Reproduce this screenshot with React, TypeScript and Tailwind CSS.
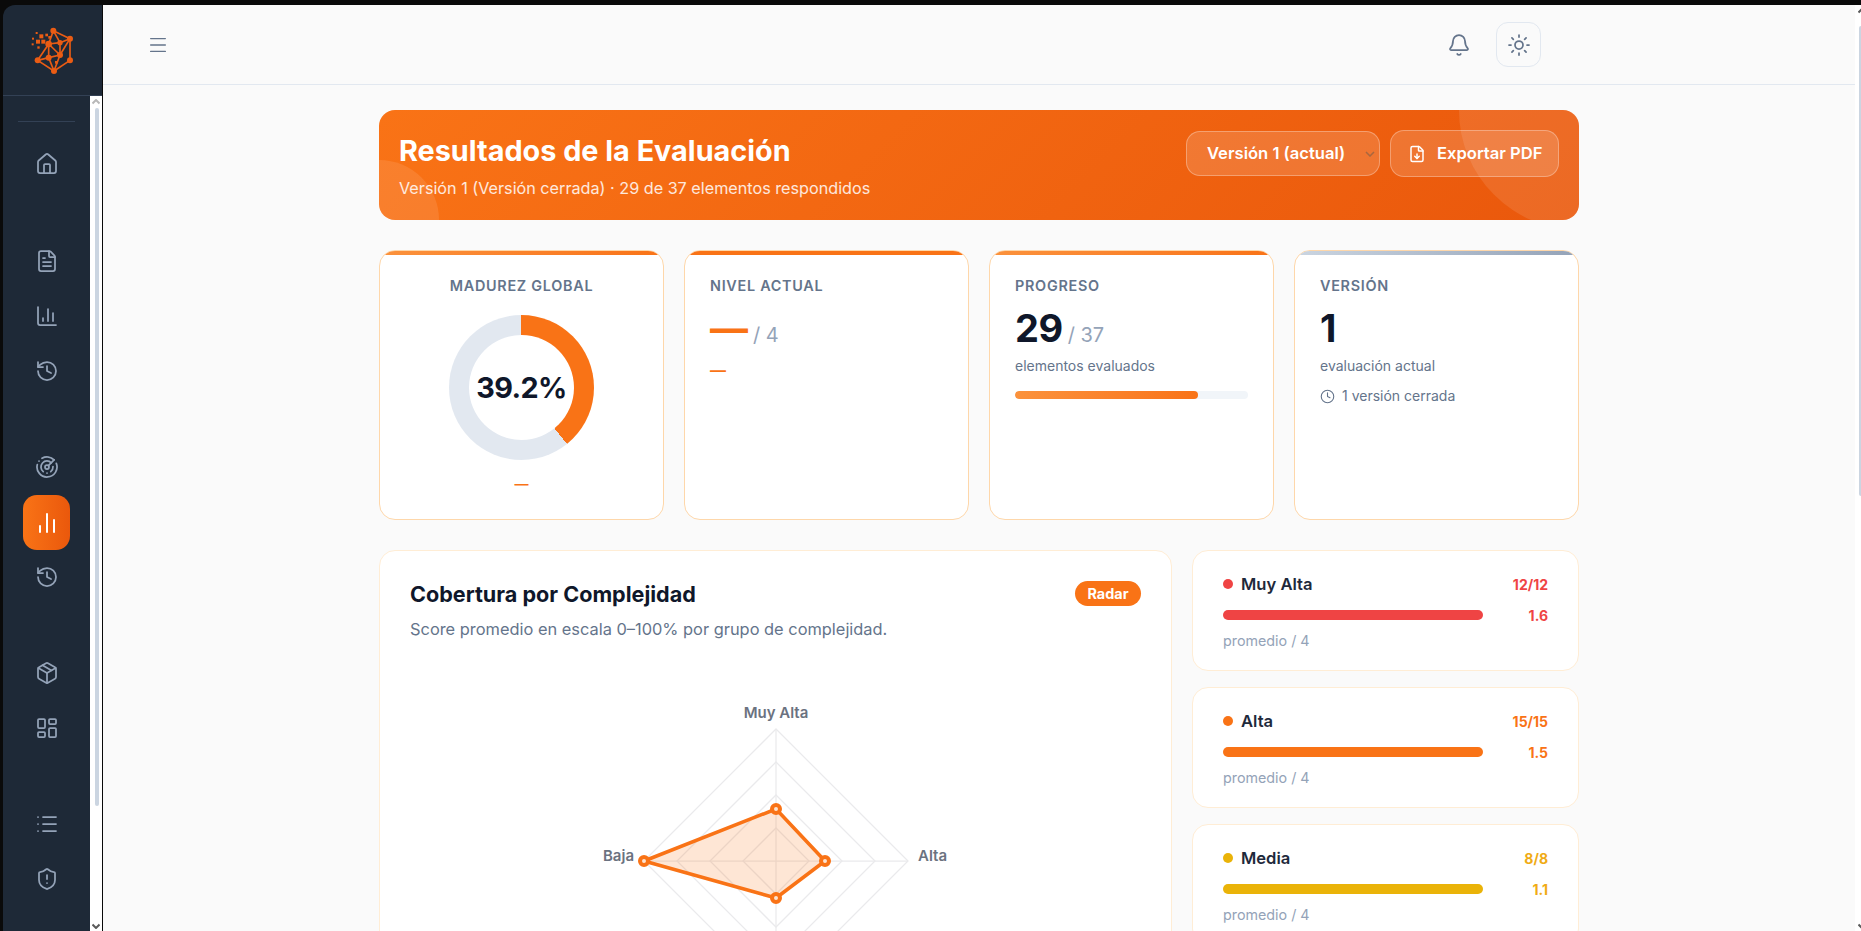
import React from 'react';
import {
  House,
  FileText,
  ChartColumn,
  History,
  Radar,
  ChartNoAxesColumn,
  Package,
  LayoutDashboard,
  List,
  ShieldAlert,
  Menu,
  Bell,
  Sun,
  FileDown,
  Clock,
} from 'lucide-react';

const navGroups = [
  [{ icon: House }],
  [{ icon: FileText }, { icon: ChartColumn }, { icon: History }],
  [{ icon: Radar }, { icon: ChartNoAxesColumn, active: true }, { icon: History }],
  [{ icon: Package }, { icon: LayoutDashboard }],
  [{ icon: List }, { icon: ShieldAlert }],
];

const groups = [
  { name: 'Muy Alta', count: '12/12', avg: '1.6', dot: 'bg-[#ef4444]', text: 'text-[#ef4444]' },
  { name: 'Alta', count: '15/15', avg: '1.5', dot: 'bg-[#f97316]', text: 'text-[#f97316]' },
  { name: 'Media', count: '8/8', avg: '1.1', dot: 'bg-[#eab308]', text: 'text-[#f0ab14]' },
];

// logo dibujado a mano, nodos y lineas de la red
const Logo = () => {
  const nodes: [number, number, number][] = [
    [160, 87, 9], [210, 111, 9], [210, 176, 9], [162, 208, 9], [113, 176, 9],
    [146, 127, 10], [180, 123, 8], [146, 168, 9], [180, 160, 9],
  ];
  const lines = [
    [160, 87, 210, 111], [210, 111, 210, 176], [210, 176, 162, 208], [162, 208, 113, 176],
    [113, 176, 146, 127], [146, 127, 160, 87], [160, 87, 180, 123], [180, 123, 210, 111],
    [180, 123, 180, 160], [146, 127, 180, 160], [146, 127, 146, 168], [113, 176, 146, 168],
    [146, 168, 180, 160], [146, 168, 162, 208], [180, 160, 210, 111], [146, 127, 180, 123],
    [180, 160, 162, 208],
  ];
  const squares = [
    [118, 98, 12], [108, 114, 12], [124, 114, 12], [145, 103, 8], [136, 96, 8], [107, 91, 6],
    [96, 108, 6], [95, 125, 6], [112, 134, 7], [165, 178, 8],
  ];
  return (
    <svg width="45" height="50" viewBox="90 70 135 150">
      {lines.map((l, i) => (
        <line key={i} x1={l[0]} y1={l[1]} x2={l[2]} y2={l[3]} stroke="#ea5c14" strokeWidth="5" />
      ))}
      {nodes.map((n, i) => (
        <circle key={i} cx={n[0]} cy={n[1]} r={n[2]} fill="#ea5c14" />
      ))}
      {squares.map((s, i) => (
        <rect key={i} x={s[0]} y={s[1]} width={s[2]} height={s[2]} fill="#ea5c14" />
      ))}
    </svg>
  );
};

const ScrollUp = ({ color }: { color: string }) => (
  <svg width="8" height="6" viewBox="0 0 8 6" className="shrink-0">
    <path d="M0.5 4.5 L4 1 L7.5 4.5" fill="none" stroke={color} strokeWidth="2" />
  </svg>
);

const ScrollDown = ({ color }: { color: string }) => (
  <svg width="8" height="6" viewBox="0 0 8 6" className="shrink-0">
    <path d="M0.5 1.5 L4 5 L7.5 1.5" fill="none" stroke={color} strokeWidth="2" />
  </svg>
);

const Sidebar = () => (
  <aside className="w-[99px] mr-px shrink-0 bg-[#1e2937] rounded-tl-[12px] flex flex-col">
    <div className="h-[91px] shrink-0 border-b border-[#334155] flex items-center justify-center pr-px">
      <Logo />
    </div>
    <div className="flex-1 flex min-h-0">
      <nav className="flex-1 min-w-0">
        <div className="mt-[25px] mx-[15px] h-px bg-[#334155]" />
        <div className="mt-[15px] flex flex-col gap-[42px]">
          {navGroups.map((group, i) => (
            <div key={i} className={`flex flex-col gap-px ${i === 0 ? 'mb-px' : ''}`}>
              {group.map((item, j) => {
                const Icon = item.icon;
                return item.active ? (
                  <div key={j} className="h-[55px] -mb-px w-[47px] mx-auto rounded-[14px] bg-gradient-to-r from-[#f97316] to-[#ea580c] flex items-center justify-center">
                    <Icon size={24} strokeWidth={2} className="text-white" />
                  </div>
                ) : (
                  <div key={j} className="h-[54px] flex items-center justify-center">
                    <Icon size={24} strokeWidth={1.75} className="text-[#94a3b8]" />
                  </div>
                );
              })}
            </div>
          ))}
        </div>
      </nav>
      <div className="w-[12px] bg-white flex flex-col items-center pt-[3px] pb-[2px]">
        <ScrollUp color="#b8b8b8" />
        <div className="mt-[3px] w-[4px] h-[698px] rounded-full bg-[#cbd5e1] ml-px" />
        <div className="flex-1" />
        <ScrollDown color="#5a5a5a" />
      </div>
    </div>
  </aside>
);

const Header = () => (
  <header className="h-[80px] shrink-0 border-b border-[#e2e8f0] flex items-center justify-between pl-[44px] pr-[314px]">
    <Menu size={22} strokeWidth={1.5} className="text-[#64748b]" />
    <div className="flex items-center gap-[14px]">
      <div className="w-[46px] h-[46px] flex items-center justify-center">
        <Bell size={24} strokeWidth={1.75} className="text-[#64748b]" />
      </div>
      <div className="w-[45px] h-[45px] rounded-[12px] border border-[#e2e8f0] flex items-center justify-center">
        <Sun size={24} strokeWidth={1.75} className="text-[#64748b]" />
      </div>
    </div>
  </header>
);

const Banner = () => (
  <div className="relative overflow-hidden h-[110px] rounded-[16px] bg-[linear-gradient(135deg,#f97316,#ea580c)] flex items-start justify-between px-5 pt-5">
    <div className="absolute -left-[60px] -bottom-[60px] w-[120px] h-[120px] rounded-full bg-white/10" />
    <div className="absolute -right-[120px] -top-[120px] w-[240px] h-[240px] rounded-full bg-white/10" />
    <div className="relative pt-[4px]">
      <h1 className="text-[28.8px] leading-[34px] font-bold text-white">Resultados de la Evaluación</h1>
      <p className="mt-[9px] text-[16.2px] leading-[22px] text-white/85">
        Versión 1 (Versión cerrada) · 29 de 37 elementos respondidos
      </p>
    </div>
    <div className="relative flex items-center gap-[10px]">
      <div className="w-[194px] h-[45px] rounded-[14px] border border-white/30 bg-white/15 flex items-center justify-between pl-[20px] pr-[4px]">
        <span className="text-[16.6px] font-semibold text-white">Versión 1 (actual)</span>
        <svg width="10" height="6" viewBox="0 0 10 6">
          <path d="M1 1 L5 5 L9 1" fill="none" stroke="#a8673f" strokeWidth="1.5" />
        </svg>
      </div>
      <div className="w-[169px] h-[47px] rounded-[14px] border border-white/30 bg-white/15 flex items-center pl-[17px] gap-[11px]">
        <FileDown size={18} strokeWidth={2} className="text-white" />
        <span className="text-[16.6px] font-semibold text-white">Exportar PDF</span>
      </div>
    </div>
  </div>
);

const StatCard = ({ bar, children, center }: { bar: string; children: React.ReactNode; center?: boolean }) => (
  <div className="rounded-[16px] border border-[#fed7aa] bg-white overflow-hidden">
    <div className={`h-[4px] ${bar}`} />
    <div className={`px-[25px] pt-[21px] flex flex-col ${center ? 'items-center' : ''}`}>{children}</div>
  </div>
);

const StatTitle = ({ children }: { children: React.ReactNode }) => (
  <div className="text-[14.4px] leading-[20px] font-semibold tracking-[0.72px] text-[#64748b]">{children}</div>
);

const Stats = () => (
  <div className="mt-[30px] grid grid-cols-4 gap-5 h-[270px]">
    <StatCard bar="bg-gradient-to-r from-[#fb923c] to-[#f97316]" center>
      <StatTitle>MADUREZ GLOBAL</StatTitle>
      <div className="mt-[19px] w-[145px] h-[145px] rounded-full bg-[conic-gradient(#f97316_0_39.2%,#e2e8f0_39.2%_100%)] flex items-center justify-center">
        <div className="w-[105px] h-[105px] rounded-full bg-white flex items-center justify-center text-[28.8px] tracking-[-0.6px] font-bold text-[#0f172a]">
          39.2%
        </div>
      </div>
      <div className="mt-[14px] text-[14px] leading-[20px] font-semibold text-[#f97316]">—</div>
    </StatCard>
    <StatCard bar="bg-[#f97316]">
      <StatTitle>NIVEL ACTUAL</StatTitle>
      <div className="mt-[13px] h-[38px] flex items-baseline gap-[5px]">
        <span className="text-[38px] leading-[38px] font-bold text-[#f97316]">—</span>
        <span className="text-[20px] leading-[24px] text-[#94a3b8]">/ 4</span>
      </div>
      <div className="mt-[13px] text-[16px] leading-[20px] font-semibold text-[#f97316]">—</div>
    </StatCard>
    <StatCard bar="bg-gradient-to-r from-[#fb923c] to-[#f97316]">
      <StatTitle>PROGRESO</StatTitle>
      <div className="mt-[13px] h-[38px] flex items-baseline gap-[5px]">
        <span className="text-[38px] leading-[38px] font-bold tracking-[-0.5px] text-[#0f172a]">29</span>
        <span className="text-[20px] leading-[24px] text-[#94a3b8]">/ 37</span>
      </div>
      <div className="mt-[9px] text-[14px] leading-[20px] text-[#64748b]">elementos evaluados</div>
      <div className="mt-[15px] h-[8px] rounded-full bg-[#f1f5f9] overflow-hidden">
        <div className="h-full w-[78.4%] rounded-full bg-gradient-to-r from-[#fb923c] to-[#f97316]" />
      </div>
    </StatCard>
    <StatCard bar="bg-gradient-to-r from-[#cbd5e1] to-[#94a3b8]">
      <StatTitle>VERSIÓN</StatTitle>
      <div className="mt-[13px] h-[38px] flex items-baseline">
        <span className="text-[38px] leading-[38px] font-bold text-[#0f172a]">1</span>
      </div>
      <div className="mt-[9px] text-[14px] leading-[20px] text-[#64748b]">evaluación actual</div>
      <div className="mt-[10px] flex items-center gap-[7px] text-[14px] leading-[20px] text-[#64748b]">
        <Clock size={15} strokeWidth={1.75} />
        <span>1 versión cerrada</span>
      </div>
    </StatCard>
  </div>
);

// radar con 4 ejes, radios sacados de la captura
const RadarChart = () => {
  const cx = 210;
  const cy = 171;
  const levels = [33, 66, 99, 132];
  const pts: [number, number][] = [
    [cx, cy - 52],
    [cx + 49, cy],
    [cx, cy + 37],
    [cx - 132, cy],
  ];
  return (
    <svg width="420" height="320" viewBox="0 0 420 320" className="mt-[50px] mx-auto block">
      {levels.map((r) => (
        <polygon
          key={r}
          points={`${cx},${cy - r} ${cx + r},${cy} ${cx},${cy + r} ${cx - r},${cy}`}
          fill="none"
          stroke="#eaeaec"
          strokeWidth="1.25"
        />
      ))}
      <line x1={cx} y1={cy - 132} x2={cx} y2={cy + 132} stroke="#eaeaec" strokeWidth="1.25" />
      <line x1={cx - 132} y1={cy} x2={cx + 132} y2={cy} stroke="#eaeaec" strokeWidth="1.25" />
      <polygon
        points={pts.map((p) => p.join(',')).join(' ')}
        fill="#f97316"
        fillOpacity="0.18"
        stroke="#f97316"
        strokeWidth="3.5"
        strokeLinejoin="round"
      />
      {pts.map((p, i) => (
        <circle key={i} cx={p[0]} cy={p[1]} r="4" fill="#fde4d2" stroke="#f97316" strokeWidth="4" />
      ))}
      <g fontSize="15" fontWeight="600" fill="#6b7280">
        <text x={cx} y={cy - 143} textAnchor="middle">Muy Alta</text>
        <text x={cx + 142} y={cy} textAnchor="start">Alta</text>
        <text x={cx - 142} y={cy} textAnchor="end">Baja</text>
      </g>
    </svg>
  );
};

const RadarCard = () => (
  <div className="h-[520px] rounded-[16px] border border-[#ffedd5] bg-white pt-[29px] px-[30px]">
    <div className="flex items-start justify-between">
      <h2 className="text-[21.6px] leading-[28px] font-bold text-[#0f172a]">Cobertura por Complejidad</h2>
      <span className="mt-px h-[25px] w-[66px] rounded-full bg-[#f97316] flex items-center justify-center text-[14.4px] font-bold text-white">
        Radar
      </span>
    </div>
    <p className="mt-[10px] text-[16.4px] leading-[22px] text-[#64748b]">
      Score promedio en escala 0–100% por grupo de complejidad.
    </p>
    <RadarChart />
  </div>
);

const GroupCard = ({ g }: { g: (typeof groups)[number] }) => (
  <div className="h-[121px] shrink-0 rounded-[16px] border border-[#ffedd5] bg-white px-[30px] pt-[21px]">
    <div className="h-[24px] flex items-center justify-between">
      <div className="flex items-center gap-[8px]">
        <span className={`w-[10px] h-[10px] rounded-full ${g.dot}`} />
        <span className="text-[16.6px] font-semibold text-[#1e293b]">{g.name}</span>
      </div>
      <span className={`text-[14px] font-bold ${g.text}`}>{g.count}</span>
    </div>
    <div className="mt-[7px] h-[24px] flex items-center justify-between">
      <div className={`w-[260px] h-[10px] rounded-full ${g.dot}`} />
      <span className={`text-[14px] font-bold ${g.text}`}>{g.avg}</span>
    </div>
    <div className="mt-[4px] text-[14.3px] leading-[20px] text-[#94a3b8]">promedio / 4</div>
  </div>
);

export default function App() {
  return (
    <div className="h-screen w-full overflow-hidden bg-[#0a0a0a] pt-[5px] pl-[3px] flex [font-family:Inter,sans-serif]">
      <Sidebar />
      <main className="flex-1 min-w-0 flex">
        <div className="flex-1 min-w-0 flex flex-col bg-[#fafafa]">
          <Header />
          <div className="flex-1 min-h-0 overflow-hidden pt-[25px]">
            <div className="w-[1200px] mx-auto">
              <Banner />
              <Stats />
              <div className="mt-[30px] grid grid-cols-[793px_387px] gap-5">
                <RadarCard />
                <div className="flex flex-col gap-4">
                  {groups.map((g) => (
                    <GroupCard key={g.name} g={g} />
                  ))}
                </div>
              </div>
            </div>
          </div>
        </div>
        <div className="w-[6px] shrink-0 bg-white overflow-hidden flex flex-col pl-[3px] pt-[3px] pb-[2px]">
          <ScrollUp color="#5a5a5a" />
          <div className="mt-[12px] ml-px w-[4px] h-[470px] shrink-0 rounded-full bg-[#cbd5e1]" />
          <div className="flex-1" />
          <ScrollDown color="#5a5a5a" />
        </div>
      </main>
    </div>
  );
}
